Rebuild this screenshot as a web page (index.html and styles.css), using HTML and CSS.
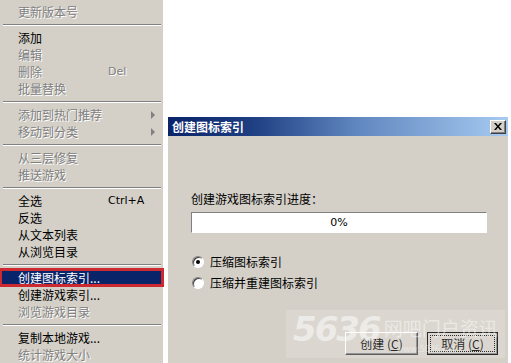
FILE: index.html
```html
<!DOCTYPE html>
<html lang="zh-CN">
<head>
    <meta charset="UTF-8" />
    <title>创建图标索引</title>
    <link rel="stylesheet" href="styles.css">
</head>
<body>
    <div class="menu">
        <div class="item disabled">更新版本号</div>
        <div class="sep"></div>
        <div class="item">添加</div>
        <div class="item disabled">编辑</div>
        <div class="item disabled">删除<span class="key">Del</span></div>
        <div class="item disabled">批量替换</div>
        <div class="sep"></div>
        <div class="item disabled">添加到热门推荐<span class="arrow"></span></div>
        <div class="item disabled">移动到分类<span class="arrow"></span></div>
        <div class="sep"></div>
        <div class="item disabled">从三层修复</div>
        <div class="item disabled">推送游戏</div>
        <div class="sep"></div>
        <div class="item">全选<span class="key">Ctrl+A</span></div>
        <div class="item">反选</div>
        <div class="item">从文本列表</div>
        <div class="item">从浏览目录</div>
        <div class="sep"></div>
        <div class="item active">创建图标索引...</div>
        <div class="item">创建游戏索引...</div>
        <div class="item disabled">浏览游戏目录</div>
        <div class="sep"></div>
        <div class="item">复制本地游戏...</div>
        <div class="item disabled">统计游戏大小</div>
    </div>

    <div class="dialog">
        <div class="titlebar">
            <span class="title">创建图标索引</span>
            <button class="close" aria-label="关闭">
                <svg viewBox="0 0 8 7" width="8" height="7">
                    <path d="M0 0h2l2 2.5L6 0h2L5 3.5 8 7H6L4 4.5 2 7H0l3-3.5z" fill="#000"/>
                </svg>
            </button>
        </div>
        <div class="body">
            <div class="label">创建游戏图标索引进度：</div>
            <div class="progress">0%</div>
            <label class="radio"><span class="dot checked"></span>压缩图标索引</label>
            <label class="radio"><span class="dot"></span>压缩并重建图标索引</label>
            <div class="buttons">
                <button class="btn create">创建 (<u>C</u>)</button>
                <button class="btn cancel">取消 (<u>C</u>)</button>
            </div>
        </div>
        <div class="watermark">
            <span class="wm-num">5636</span>
            <span class="wm-text">网吧门户资讯</span>
            <span class="wm-url">www.5636.net</span>
        </div>
    </div>
</body>
</html>
```

FILE: styles.css
```css
body {
    margin: 0;
    background: #fff;
    font-family: "Noto Sans CJK SC", "DejaVu Sans", sans-serif;
    font-size: 12px;
    display: flex;
    align-items: flex-start;
    height: 363px;
    overflow: hidden;
}
.menu {
    width: 163px;
    background: #d4d0c8;
    padding-top: 3px;
    height: 360px;
    flex-shrink: 0;
}
.item {
    position: relative;
    height: 17px;
    line-height: 17px;
    padding-left: 18px;
    color: #000;
    width: 143px;
}
.item.disabled {
    color: #808080;
    text-shadow: 1px 1px 0 #fff;
}
.item.active {
    background: #0a246a;
    color: #fff;
    box-shadow: 0 0 0 1px #cc2a30, inset 0 0 0 2px #cc2a30;
    width: 145px;
}
.key {
    position: absolute;
    left: 108px;
    font-family: "DejaVu Sans", sans-serif;
    font-size: 11px;
}
.arrow {
    position: absolute;
    left: 151px;
    top: 5px;
    border-left: 4px solid #808080;
    border-top: 4px solid transparent;
    border-bottom: 4px solid transparent;
}
.sep {
    height: 9px;
    display: flex;
    align-items: center;
    padding: 0 2px 0 3px;
}
.sep::before {
    content: "";
    flex: 1;
    border-top: 1px solid #808080;
    border-bottom: 1px solid #fff;
}

.dialog {
    position: relative;
    margin: 117px 0 0 5px;
    width: 340px;
    height: 246px;
    background: #d4d0c8;
}
.titlebar {
    height: 19px;
    display: flex;
    align-items: center;
    justify-content: space-between;
    padding: 0 2px 0 4px;
    background: linear-gradient(90deg, #0a246a 0%, #1e3f82 25%, #5f86bf 55%, #a6caf0 100%);
}
.title {
    color: #fff;
    font-weight: bold;
    font-size: 12px;
}
.close {
    width: 16px;
    height: 14px;
    padding: 0;
    display: flex;
    align-items: center;
    justify-content: center;
    background: #d4d0c8;
    border: 1px solid;
    border-color: #fff #404040 #404040 #fff;
    box-shadow: inset -1px -1px 0 #808080;
}
.body {
    padding: 55px 21px 0 23px;
}
.label {
    height: 16px;
    line-height: 16px;
    margin-bottom: 5px;
}
.progress {
    height: 19px;
    width: 294px;
    line-height: 19px;
    text-align: center;
    background: #fff;
    border: 1px solid;
    border-color: #808080 #fff #fff #808080;
    font-family: "DejaVu Sans", sans-serif;
    font-size: 11px;
    margin-bottom: 18px;
}
.radio {
    display: flex;
    align-items: center;
    height: 21px;
}
.dot {
    width: 10px;
    height: 10px;
    border-radius: 50%;
    background: #fff;
    border: 1px solid;
    border-color: #808080 #fff #fff #808080;
    box-shadow: inset 1px 1px 0 #404040;
    margin: 0 6px 0 1px;
    display: flex;
    align-items: center;
    justify-content: center;
}
.dot.checked::after {
    content: "";
    width: 4px;
    height: 4px;
    border-radius: 50%;
    background: #000;
}
.buttons {
    display: flex;
    justify-content: flex-end;
    gap: 9px;
    margin: 39px -11px 0 0;
}
.btn {
    height: 23px;
    font-family: "Noto Sans CJK SC", sans-serif;
    font-size: 12px;
    background: #d4d0c8;
    border: 1px solid;
    border-color: #fff #404040 #404040 #fff;
    box-shadow: inset -1px -1px 0 #808080;
    padding: 0;
    color: #000;
}
.create {
    width: 73px;
}
.cancel {
    width: 71px;
    border: 1px solid #000;
    outline: 1px dotted #000;
    outline-offset: -4px;
}
.watermark {
    position: absolute;
    left: 118px;
    top: 193px;
    width: 219px;
    height: 48px;
    background: rgba(255, 255, 255, 0.16);
    display: flex;
    align-items: flex-start;
    white-space: nowrap;
    pointer-events: none;
}
.wm-num {
    font-family: "DejaVu Sans", sans-serif;
    font-style: italic;
    font-weight: bold;
    font-size: 34px;
    line-height: 34px;
    color: rgba(255, 255, 255, 0.5);
    letter-spacing: -2px;
    margin: 2px 4px 0 7px;
}
.wm-text {
    font-size: 19px;
    line-height: 28px;
    margin-top: 4px;
    color: rgba(255, 255, 255, 0.45);
}
.wm-url {
    position: absolute;
    left: 110px;
    top: 34px;
    font-size: 9px;
    line-height: 10px;
    color: rgba(255, 255, 255, 0.4);
}
```
